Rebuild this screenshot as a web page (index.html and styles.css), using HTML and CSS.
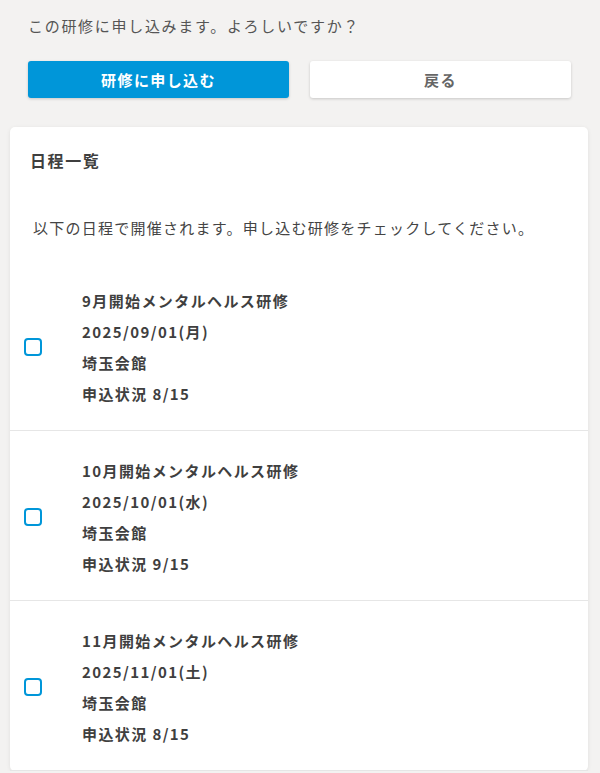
FILE: index.html
```html
<!DOCTYPE html>
<html lang="ja">
<head>
    <meta charset="UTF-8">
    <meta name="viewport" content="width=device-width, initial-scale=1.0">
    <title>研修申し込み確認</title>
    <link rel="stylesheet" href="styles.css">
</head>
<body>
    <div class="confirm">
        <p class="confirm-text">この研修に申し込みます。よろしいですか？</p>
        <div class="actions">
            <button type="button" class="btn btn-primary">研修に申し込む</button>
            <button type="button" class="btn btn-secondary">戻る</button>
        </div>
    </div>

    <section class="card">
        <h2 class="card-title">日程一覧</h2>
        <p class="card-desc">以下の日程で開催されます。申し込む研修をチェックしてください。</p>

        <ul class="schedule">
            <li class="schedule-item">
                <label class="check"><input type="checkbox"><span class="box"></span></label>
                <div class="info">
                    <div>9月開始メンタルヘルス研修</div>
                    <div>2025/09/01(月)</div>
                    <div>埼玉会館</div>
                    <div>申込状況 8/15</div>
                </div>
            </li>
            <li class="schedule-item">
                <label class="check"><input type="checkbox"><span class="box"></span></label>
                <div class="info">
                    <div>10月開始メンタルヘルス研修</div>
                    <div>2025/10/01(水)</div>
                    <div>埼玉会館</div>
                    <div>申込状況 9/15</div>
                </div>
            </li>
            <li class="schedule-item">
                <label class="check"><input type="checkbox"><span class="box"></span></label>
                <div class="info">
                    <div>11月開始メンタルヘルス研修</div>
                    <div>2025/11/01(土)</div>
                    <div>埼玉会館</div>
                    <div>申込状況 8/15</div>
                </div>
            </li>
        </ul>
    </section>
</body>
</html>
```

FILE: styles.css
```css
body {
    font-family: "Noto Sans CJK JP", "Noto Sans", sans-serif;
    background-color: #f3f2f1;
    margin: 0;
    padding: 0;
    color: #444;
}

.confirm {
    padding: 14px 29px 0 28px;
}

.confirm-text {
    margin: 0;
    font-size: 15px;
    line-height: 24px;
    letter-spacing: 1.7px;
    color: #555;
}

.actions {
    display: flex;
    gap: 21px;
    margin-top: 23px;
}

.btn {
    flex: 1;
    height: 37px;
    border: none;
    border-radius: 3px;
    font-family: inherit;
    font-size: 15px;
    font-weight: bold;
    letter-spacing: 1.4px;
    cursor: pointer;
    box-shadow: 0 1px 3px rgba(0, 0, 0, 0.18);
}

.btn-primary {
    background-color: #0096d9;
    color: #fff;
}

.btn-secondary {
    background-color: #fff;
    color: #666;
}

.card {
    width: 578px;
    margin: 29px 0 0 10px;
    background: #fff;
    border-radius: 5px;
    box-shadow: 0 1px 4px rgba(0, 0, 0, 0.08);
}

.card-title {
    margin: 0;
    padding: 20px 20px 0 20px;
    font-size: 16px;
    line-height: 26px;
    letter-spacing: 1.6px;
    font-weight: bold;
    color: #3f3f3f;
}

.card-desc {
    margin: 0;
    padding: 42px 20px 20px 23px;
    font-size: 15px;
    line-height: 26px;
    letter-spacing: 1.25px;
    color: #444;
}

.schedule {
    list-style: none;
    margin: 0;
    padding: 0;
}

.schedule-item {
    display: flex;
    align-items: center;
    padding: 24px 0 21px 14px;
    border-bottom: 1px solid #e6e6e6;
}

.check {
    width: 18px;
    height: 18px;
    margin-right: 40px;
    position: relative;
}

.check input {
    position: absolute;
    opacity: 0;
    margin: 0;
}

.box {
    display: block;
    width: 18px;
    height: 18px;
    box-sizing: border-box;
    border: 2.5px solid #0096d9;
    border-radius: 4px;
}

.info div {
    font-size: 15px;
    line-height: 31px;
    font-weight: bold;
    letter-spacing: 1.4px;
    color: #3f3f3f;
}
```
